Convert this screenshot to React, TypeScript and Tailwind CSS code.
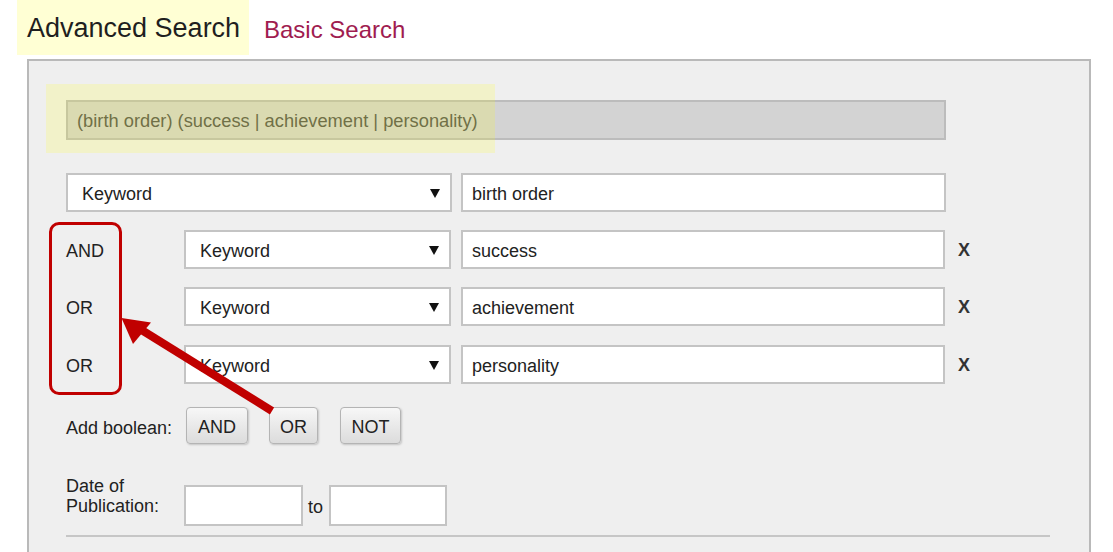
import React from "react";

const FONT = "font-['Liberation_Sans',Arial,sans-serif]";

function SelectBox({ width }: { width: string }) {
  return (
    <div
      className={`${width} h-[39px] flex items-center justify-between border-2 border-[#c4c4c4] bg-white pl-[14px] pr-[10px] text-[18px] text-[#222]`}
    >
      <span className="pt-[3px]">Keyword</span>
      <svg width="10" height="10" viewBox="0 0 10 10">
        <polygon points="0,1 10,1 5,10" fill="#111" />
      </svg>
    </div>
  );
}

function TextBox({ value, width }: { value: string; width: string }) {
  return (
    <div
      className={`${width} h-[39px] flex items-center border-2 border-[#c4c4c4] bg-white pl-[9px] pt-[3px] text-[18px] text-[#222] overflow-hidden whitespace-nowrap`}
    >
      {value}
    </div>
  );
}

function BoolButton({ label, width }: { label: string; width: string }) {
  return (
    <div
      className={`${width} h-[37px] flex items-center justify-center rounded-[4px] border border-[#b4b4b4] bg-gradient-to-b from-[#f7f7f7] to-[#dcdcdc] shadow-[1px_1px_2px_rgba(0,0,0,0.18)] pt-[4px] text-[18px] text-[#222]`}
    >
      {label}
    </div>
  );
}

const ROWS = [
  { op: "AND", value: "success", gap: "mt-[18px]" },
  { op: "OR", value: "achievement", gap: "mt-[18px]" },
  { op: "OR", value: "personality", gap: "mt-[19px]" },
];

export default function App() {
  return (
    <div className={`relative w-[1113px] h-[552px] overflow-hidden bg-white ${FONT}`}>
      {/* tabs */}
      <div className="flex items-start pl-[17px]">
        <div className="h-[55px] w-[232px] bg-[#ffffd4] pl-[10px] pt-[15px] text-[27px] leading-none text-[#1f1f1f]">
          Advanced Search
        </div>
        <div className="ml-[15px] pt-[18px] text-[24px] leading-none text-[#a01c50]">Basic Search</div>
      </div>

      {/* panel */}
      <div className="relative ml-[27px] mt-[4px] w-[1064px] h-[600px] border-2 border-[#b9b9b9] bg-[#efefef] pl-[37px] pt-[39px]">
        <div className="w-[880px] h-[40px] flex items-center border-2 border-[#bcbcbc] bg-[#d3d3d3] pl-[9px] pt-[2px] text-[18.3px] text-[#555]">
          (birth order) (success | achievement | personality)
        </div>
        {/* highlight over the query */}
        <div className="absolute left-[17px] top-[23px] w-[449px] h-[69px] bg-[#ffff00]/[0.16]" />

        <div className="mt-[33px] flex items-center">
          <SelectBox width="w-[386px]" />
          <div className="ml-[9px]">
            <TextBox value="birth order" width="w-[485px]" />
          </div>
        </div>

        {ROWS.map((r, i) => (
          <div key={i} className={`${r.gap} flex items-center text-[18px] text-[#222]`}>
            <div className="w-[118px] pt-[4px]">{r.op}</div>
            <SelectBox width="w-[267px]" />
            <div className="ml-[10px]">
              <TextBox value={r.value} width="w-[484px]" />
            </div>
            <div className="ml-[13px] pt-[2px] text-[18px] font-bold text-[#333]">X</div>
          </div>
        ))}

        <div className="mt-[23px] flex items-center text-[18px] text-[#222]">
          <div className="w-[120px] pt-[6px]">Add boolean:</div>
          <BoolButton label="AND" width="w-[62px]" />
          <div className="ml-[21px]">
            <BoolButton label="OR" width="w-[49px]" />
          </div>
          <div className="ml-[22px]">
            <BoolButton label="NOT" width="w-[61px]" />
          </div>
        </div>

        <div className="mt-[31px] flex items-start text-[18px] text-[#222]">
          <div className="w-[118px] pt-[1px] leading-[20px]">
            Date of
            <br />
            Publication:
          </div>
          <div className="mt-[10px] flex items-center">
            <div className="w-[119px] h-[41px] border-2 border-[#c4c4c4] bg-white" />
            <span className="ml-[5px] mt-[4px]">to</span>
            <div className="ml-[6px] w-[118px] h-[41px] border-2 border-[#c4c4c4] bg-white" />
          </div>
        </div>

        <div className="mt-[9px] w-[984px] h-[2px] bg-[#c6c6c6]" />

        {/* callout around the operators */}
        <div className="absolute left-[20px] top-[161px] w-[73px] h-[173px] rounded-[10px] border-[3px] border-[#c00000]" />
      </div>

      {/* arrow */}
      <svg className="absolute left-0 top-0 pointer-events-none" width="1113" height="552">
        <line x1="272" y1="411" x2="140" y2="329" stroke="#c00000" strokeWidth="8" />
        <polygon points="121.5,318 151,322.5 133,344" fill="#c00000" />
      </svg>
    </div>
  );
}
